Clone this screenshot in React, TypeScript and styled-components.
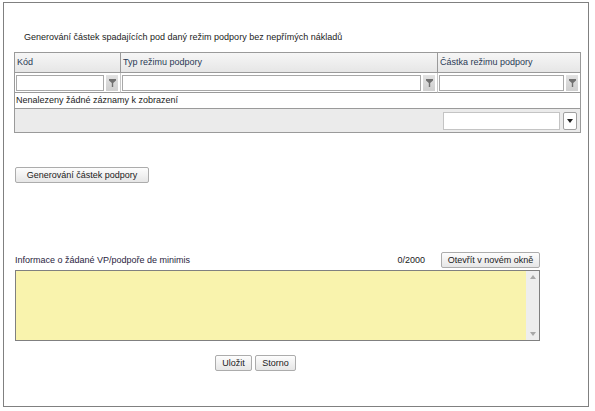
import React from 'react';
import styled, { createGlobalStyle } from 'styled-components';

const GlobalStyle = createGlobalStyle`
  body {
    margin: 0;
    background: #ffffff;
    font-family: "Liberation Sans", Arial, sans-serif;
    font-size: 9px;
    color: #1a1a1a;
  }
`;

const Page = styled.div`
  padding: 2px 0 0 3px;
  width: 595px;
  height: 411px;
  box-sizing: border-box;
`;

const Frame = styled.div`
  width: 586px;
  height: 405px;
  box-sizing: border-box;
  border: 1px solid #808080;
  padding: 0 0 0 10px;
  display: flex;
  flex-direction: column;
`;

const Title = styled.div`
  margin: 28px 0 0 10px;
  height: 12px;
  line-height: 12px;
  color: #1b1b1b;
`;

const Table = styled.div`
  margin-top: 9px;
  width: 567px;
  box-sizing: border-box;
  border: 1px solid #9a9a9a;
`;

const Row = styled.div`
  display: grid;
  grid-template-columns: 106px 317px 1fr;
`;

const HeadCell = styled.div<{ $last?: boolean }>`
  height: 19px;
  line-height: 19px;
  padding-left: 2px;
  color: #2a3a55;
  background: linear-gradient(#f6f6f6, #e6e6e6);
  border-right: ${p => (p.$last ? 'none' : '1px solid #9a9a9a')};
  border-bottom: 1px solid #9a9a9a;
`;

const FilterCell = styled.div<{ $last?: boolean }>`
  height: 19px;
  display: flex;
  align-items: center;
  gap: 2px;
  padding: 0 2px 0 1px;
  border-right: ${p => (p.$last ? 'none' : '1px solid #c8c8c8')};
  border-bottom: 1px solid #9a9a9a;
`;

const FilterInput = styled.div`
  flex: 1;
  height: 16px;
  box-sizing: border-box;
  border: 1px solid #a8a8a8;
  background: #fff;
`;

const FilterBtn = styled.div`
  width: 12px;
  height: 16px;
  background: linear-gradient(#e2e2e2, #cfcfcf);
  display: flex;
  align-items: center;
  justify-content: center;
`;

const EmptyRow = styled.div`
  height: 15px;
  line-height: 15px;
  padding-left: 1px;
  border-bottom: 1px solid #9a9a9a;
  color: #1b1b1b;
`;

const Pager = styled.div`
  height: 23px;
  background: #ebebeb;
  display: flex;
  align-items: center;
  justify-content: flex-end;
  gap: 3px;
  padding-right: 3px;
`;

const PagerSelect = styled.div`
  width: 117px;
  height: 18px;
  box-sizing: border-box;
  border: 1px solid #c4c4c4;
  background: #fff;
`;

const PagerDrop = styled.div`
  width: 14px;
  height: 18px;
  box-sizing: border-box;
  border: 1px solid #a0a0a0;
  border-radius: 2px;
  background: #fff;
  display: flex;
  align-items: center;
  justify-content: center;
`;

const Button = styled.button<{ $w?: number }>`
  height: 16px;
  box-sizing: border-box;
  padding: 0 2px;
  width: ${p => (p.$w ? `${p.$w}px` : 'auto')};
  font-family: "Liberation Sans", Arial, sans-serif;
  font-size: 9px;
  white-space: nowrap;
  color: #1a1a1a;
  background: linear-gradient(#fdfdfd, #e6e6e6);
  border: 1px solid #acacac;
  border-radius: 2px;
  line-height: 14px;
  cursor: pointer;
`;

const GenButton = styled(Button)`
  margin: 34px 0 0 1px;
  align-self: flex-start;
`;

const InfoBar = styled.div`
  margin-top: 69px;
  width: 526px;
  display: flex;
  align-items: center;
  height: 16px;
`;

const InfoLabel = styled.div`
  flex: 1;
  padding-left: 1px;
  color: #2a2440;
`;

const Counter = styled.div`
  margin-right: 16px;
  color: #1a1a1a;
`;

const TextArea = styled.div`
  margin-top: 2px;
  margin-left: 1px;
  width: 525px;
  height: 71px;
  box-sizing: border-box;
  border: 1px solid #808080;
  background: #f9f3ad;
  display: flex;
  justify-content: flex-end;
`;

const ScrollBar = styled.div`
  width: 13px;
  background: #eeeeee;
  display: flex;
  flex-direction: column;
  justify-content: space-between;
  align-items: center;
  padding: 4px 0;
`;

const Actions = styled.div`
  margin-top: 14px;
  margin-left: 201px;
  display: flex;
  gap: 3px;
`;

const Funnel = () => (
  <svg width="7" height="8" viewBox="0 0 7 8">
    <path d="M0 0h7v1.5L4.2 4v4H2.8V4L0 1.5z" fill="#707070" />
  </svg>
);

const Arrow = ({ up, color }: { up?: boolean; color: string }) => (
  <svg width="6" height="4" viewBox="0 0 6 4">
    <path d={up ? 'M0 4L3 0L6 4z' : 'M0 0h6L3 4z'} fill={color} />
  </svg>
);

const columns = ['Kód', 'Typ režimu podpory', 'Částka režimu podpory'];

export default function App() {
  return (
    <>
      <GlobalStyle />
      <Page>
        <Frame>
          <Title>Generování částek spadajících pod daný režim podpory bez nepřímých nákladů</Title>
          <Table>
            <Row>
              {columns.map((c, i) => (
                <HeadCell key={c} $last={i === columns.length - 1}>{c}</HeadCell>
              ))}
            </Row>
            <Row>
              {columns.map((c, i) => (
                <FilterCell key={c} $last={i === columns.length - 1}>
                  <FilterInput />
                  <FilterBtn><Funnel /></FilterBtn>
                </FilterCell>
              ))}
            </Row>
            <EmptyRow>Nenalezeny žádné záznamy k zobrazení</EmptyRow>
            <Pager>
              <PagerSelect />
              <PagerDrop><Arrow color="#222" /></PagerDrop>
            </Pager>
          </Table>
          <GenButton $w={134}>Generování částek podpory</GenButton>
          <InfoBar>
            <InfoLabel>Informace o žádané VP/podpoře de minimis</InfoLabel>
            <Counter>0/2000</Counter>
            <Button $w={99}>Otevřít v novém okně</Button>
          </InfoBar>
          <TextArea>
            <ScrollBar>
              <Arrow up color="#a8a8a8" />
              <Arrow color="#a8a8a8" />
            </ScrollBar>
          </TextArea>
          <Actions>
            <Button $w={37}>Uložit</Button>
            <Button $w={41}>Storno</Button>
          </Actions>
        </Frame>
      </Page>
    </>
  );
}
